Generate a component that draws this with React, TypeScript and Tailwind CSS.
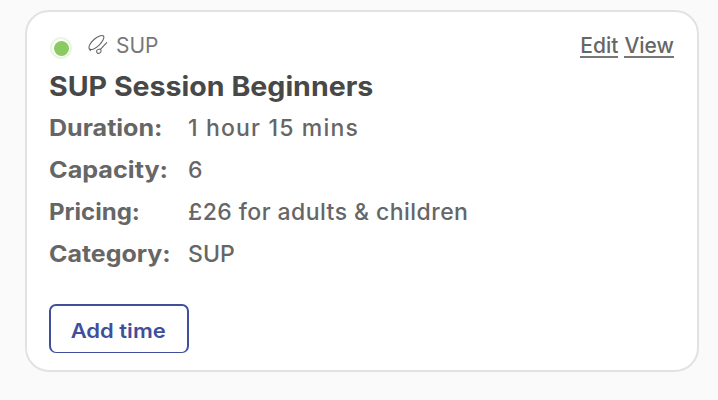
import type { ReactNode } from 'react';

interface Detail {
    label: string;
    value: string;
    labelClass: string;
    valueClass: string;
}

const details: Detail[] = [
    { label: 'Duration:', value: '1 hour 15 mins', labelClass: 'scale-x-[1.09]', valueClass: 'tracking-[1.17px]' },
    { label: 'Capacity:', value: '6', labelClass: 'scale-x-[1.095]', valueClass: 'tracking-[0.2px]' },
    { label: 'Pricing:', value: '£26 for adults & children', labelClass: 'scale-x-[1.045]', valueClass: 'tracking-[0.44px]' },
    { label: 'Category:', value: 'SUP', labelClass: 'scale-x-[1.085]', valueClass: 'tracking-[0.1px]' },
];

function BoardIcon() {
    return (
        <svg
            width="20"
            height="20"
            viewBox="0 0 20 20"
            fill="none"
            stroke="#666666"
            strokeWidth="1.1"
            strokeLinecap="round"
            strokeLinejoin="round"
        >
            <path d="M2.5 15.6L1.4 14.2C0 11.6 3 7.2 6.6 4C9.8 1.2 14 -0.2 15.4 1C16.9 2.5 14.4 7 10.9 10.4C7.6 13.6 3.4 15.4 1.4 13.9" />
            <path d="M18.7 7.6L12.9 13.9C12.1 14.7 10.8 13.8 9.6 14.6C8.2 15.5 8.3 17.6 9.6 18.2C11.2 18.9 13.1 17.5 13.1 15.8C13.1 15.1 12.8 14.3 12 13.9" />
        </svg>
    );
}

function TextLink({ children }: { children: ReactNode }) {
    return (
        <a href="#" className="h-[23px] border-b-2 border-[#777777] leading-[22px]">
            {children}
        </a>
    );
}

export default function App() {
    return (
        <div className="h-[400px] w-[718px] bg-[#fafafa] pt-[10px] pl-[25px] font-['Inter',sans-serif] text-[#666666]">
            <div className="flex h-[362px] w-[674px] flex-col items-start rounded-[24px] border-2 border-[#e2e2e2] bg-white px-[22px] pt-[16px]">
                <div className="flex h-[38px] w-full items-start">
                    <span className="mt-[9px] ml-px flex size-[22px] items-center justify-center rounded-full border-2 border-[#e8f6e0] bg-white">
                        <span className="size-[15px] rounded-full bg-[#8aca60]" />
                    </span>
                    <span className="mt-[7px] ml-[16px]">
                        <BoardIcon />
                    </span>
                    <span className="mt-[7px] ml-[8px] text-[21px] leading-[22px] text-[#777777]">SUP</span>
                    <div className="mt-[7px] mr-[1px] ml-auto flex gap-[6px] text-[21px] font-[450]">
                        <TextLink>Edit</TextLink>
                        <TextLink>View</TextLink>
                    </div>
                </div>
                <h2 className="h-[41px] origin-left scale-x-[1.058] text-[27px] leading-[42px] font-bold text-[#484848]">
                    SUP Session Beginners
                </h2>
                <dl>
                    {details.map(d => (
                        <div key={d.label} className="flex h-[42px] text-[23px] leading-[42px]">
                            <dt className="w-[139px] font-bold">
                                <span className={`inline-block origin-left ${d.labelClass}`}>{d.label}</span>
                            </dt>
                            <dd className={`font-[450] ${d.valueClass}`}>{d.value}</dd>
                        </div>
                    ))}
                </dl>
                <button className="mt-[29px] h-[49px] w-[140px] rounded-[7px] border-2 border-b border-[#3f4f9c] pt-[4px] pr-[2px] text-[20px] font-semibold text-[#3f4f9c]">
                    <span className="inline-block scale-x-[1.1]">Add time</span>
                </button>
            </div>
        </div>
    );
}
